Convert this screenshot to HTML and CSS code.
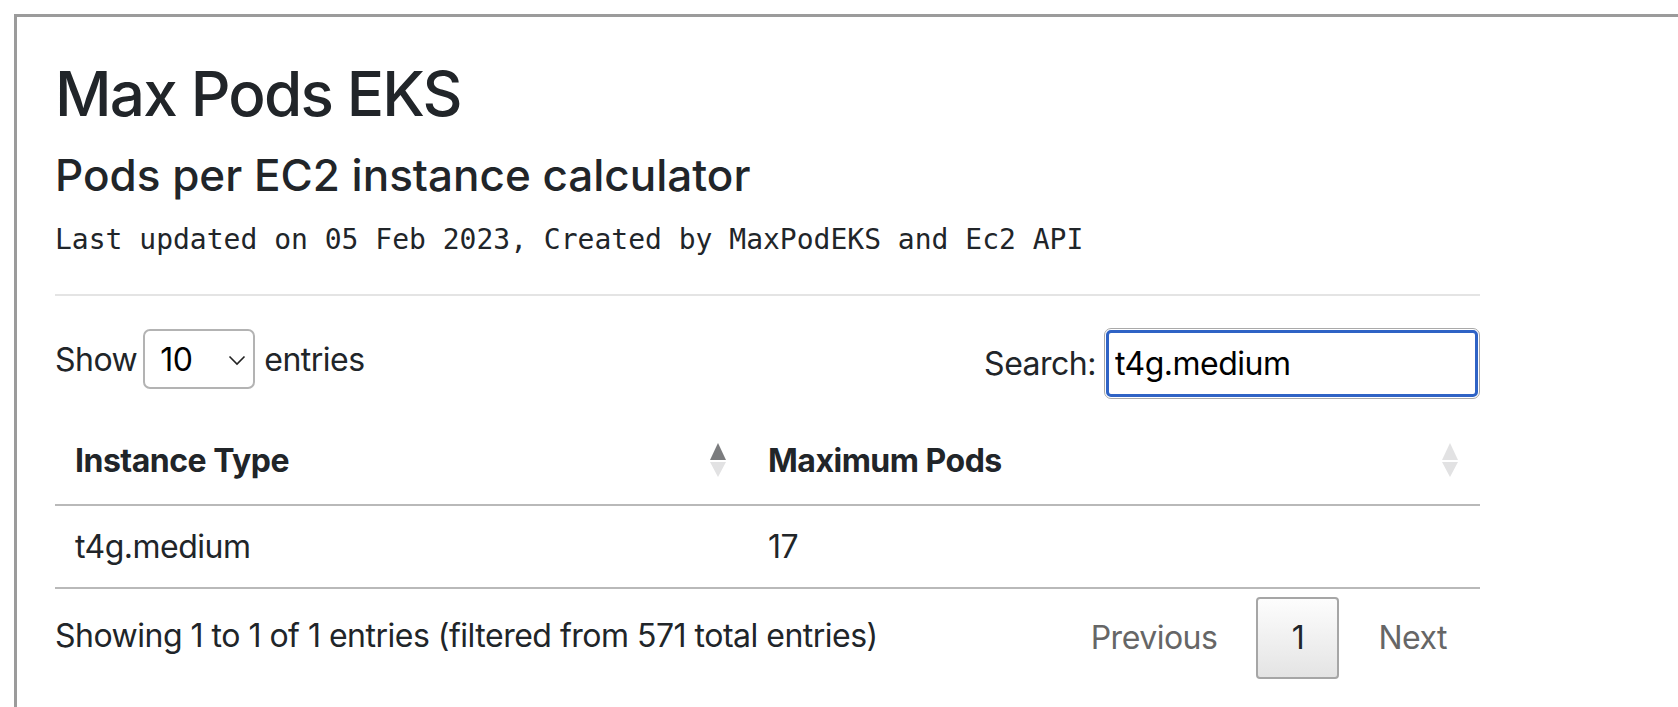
FILE: index.html
```html
<!DOCTYPE html>
<html lang="en">
<head>
<meta charset="utf-8">
<title>Max Pods EKS</title>
<link rel="stylesheet" href="styles.css">
</head>
<body>
<div class="frame">
  <div class="container">
    <h1 class="title">Max Pods EKS</h1>
    <h3 class="subtitle">Pods per EC2 instance calculator</h3>
    <p class="updated">Last updated on 05 Feb 2023, Created by MaxPodEKS and Ec2 API</p>
    <hr class="divider">
    <div class="controls">
      <div class="length">
        <span>Show</span>
        <div class="select">
          <span class="select-value">10</span>
          <svg class="chevron" width="18" height="11" viewBox="0 0 18 11"><polyline points="1.5,1.5 9,9 16.5,1.5" fill="none" stroke="#222" stroke-width="1.6"/></svg>
        </div>
        <span class="entries-label">entries</span>
      </div>
      <div class="filter">
        <label class="filter-label">Search:</label>
        <div class="search-field"><input class="search-input" type="search" value="t4g.medium"></div>
      </div>
    </div>
    <table class="data">
      <colgroup><col class="col-a"><col class="col-b"></colgroup>
      <thead>
        <tr>
          <th><div class="th-inner"><span>Instance Type</span>
            <svg class="sort" width="18" height="35" viewBox="0 0 18 35"><polygon points="9,0 17,17 1,17" fill="#7b7c7e"/><polygon points="1,19 17,19 9,34" fill="#e2e2e3"/></svg></div></th>
          <th><div class="th-inner"><span>Maximum Pods</span>
            <svg class="sort" width="18" height="35" viewBox="0 0 18 35"><polygon points="9,0 17,17 1,17" fill="#e2e2e3"/><polygon points="1,19 17,19 9,34" fill="#e2e2e3"/></svg></div></th>
        </tr>
      </thead>
      <tbody>
        <tr><td>t4g.medium</td><td>17</td></tr>
      </tbody>
    </table>
    <div class="footer">
      <div class="info">Showing 1 to 1 of 1 entries (filtered from 571 total entries)</div>
      <div class="paginate">
        <span class="page-btn disabled">Previous</span>
        <span class="page-btn current">1</span>
        <span class="page-btn disabled">Next</span>
      </div>
    </div>
  </div>
</div>
</body>
</html>
```
FILE: styles.css
```css
html, body {
  margin: 0;
  padding: 0;
  background: #ffffff;
  overflow: hidden;
}
body {
  font-family: Inter, "Noto Sans", "Liberation Sans", sans-serif;
  color: #212529;
  font-size: 32px;
  line-height: 39px;
  letter-spacing: -0.5px;
}
.frame {
  margin: 14px 0 0 14px;
  border-top: 3px solid #9b9b9b;
  border-left: 3px solid #9b9b9b;
  height: 720px;
}
.container {
  width: 1425px;
  padding: 40px 0 0 38px;
}
.title {
  margin: 0;
  font-size: 62px;
  line-height: 74px;
  font-weight: 500;
  letter-spacing: -1.8px;
}
.subtitle {
  margin: 18px 0 0;
  font-size: 44px;
  line-height: 52px;
  font-weight: 500;
  letter-spacing: 0;
}
.updated {
  margin: 22px 0 0;
  font-family: "DejaVu Sans Mono", "Liberation Mono", monospace;
  font-size: 28px;
  line-height: 34px;
  letter-spacing: 0;
}
.divider {
  margin: 37px 0 0;
  border: 0;
  border-top: 2px solid #e4e4e4;
  height: 0;
}
.controls {
  margin-top: 32px;
  height: 71px;
  display: flex;
  justify-content: space-between;
  align-items: flex-start;
}
.length {
  margin-top: 1px;
  height: 60px;
  display: flex;
  align-items: center;
  gap: 6px;
}
.entries-label {
  margin-left: 3px;
}
.select {
  width: 112px;
  height: 60px;
  box-sizing: border-box;
  border: 2px solid #b3b3b3;
  border-radius: 7px;
  display: flex;
  align-items: center;
  justify-content: space-between;
  padding: 0 7px 0 15px;
  color: #000;
}
.chevron {
  display: block;
  margin-top: 2px;
}
.filter {
  height: 71px;
  display: flex;
  align-items: center;
  gap: 8px;
}
.search-field {
  width: 376px;
  height: 71px;
  box-sizing: border-box;
  border: 1px solid #a9a9a9;
  border-radius: 7px;
  padding: 1px;
}
.search-input {
  display: block;
  width: 100%;
  height: 100%;
  box-sizing: border-box;
  border: 3px solid #2f63c5;
  border-radius: 5px;
  padding: 0 6px;
  margin: 0;
  font-family: inherit;
  font-size: 32px;
  letter-spacing: -0.5px;
  color: #000;
  background: #fff;
  outline: none;
}
.data {
  margin-top: 18px;
  width: 1425px;
  border-collapse: collapse;
  table-layout: fixed;
}
.col-a { width: 693px; }
.col-b { width: 732px; }
.data th {
  text-align: left;
  font-weight: 700;
  padding: 24px 21px 24px 20px;
  border-bottom: 2px solid #b9b9b9;
}
.th-inner {
  display: flex;
  align-items: center;
  justify-content: space-between;
  height: 39px;
}
.sort {
  display: block;
}
.data td {
  padding: 21px 20px;
  border-bottom: 2px solid #b9b9b9;
}
.footer {
  margin-top: 8px;
  display: flex;
  justify-content: space-between;
  align-items: flex-start;
}
.info {
  padding-top: 19px;
}
.paginate {
  display: flex;
}
.page-btn {
  display: block;
  height: 82px;
  box-sizing: border-box;
  line-height: 78px;
  padding: 0 31px;
  margin-left: 6px;
  border: 2px solid transparent;
  border-radius: 4px;
}
.page-btn.disabled {
  color: #666666;
}
.page-btn.current {
  width: 83px;
  padding: 0;
  text-align: center;
  color: #212529;
  border-color: #a6a6a6;
  background: linear-gradient(to bottom, #fdfdfd 0%, #e4e4e4 100%);
}
```
